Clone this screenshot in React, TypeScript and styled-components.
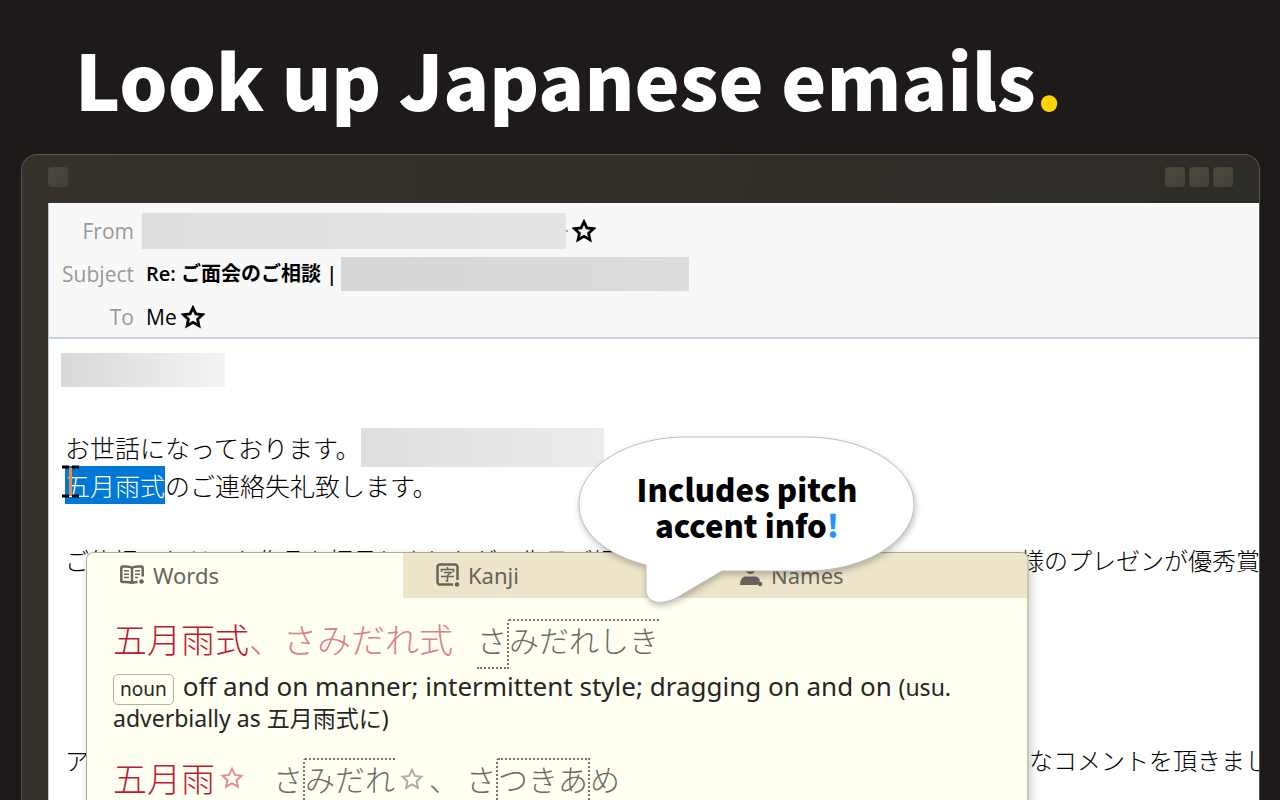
import React from "react";
import styled, { createGlobalStyle, css } from "styled-components";

const jp = `"Noto Sans CJK JP", sans-serif`;
const ui = `"Open Sans", "Noto Sans CJK JP", sans-serif`;
const dict = `"Noto Sans", "Noto Sans CJK JP", sans-serif`;

const GlobalStyle = createGlobalStyle`
  *, *::before, *::after { box-sizing: border-box; }
  body { margin: 0; background: #1e1a19; }
  h1, h2, p, dl, dt, dd { margin: 0; font-weight: inherit; }
`;

const Page = styled.main`
  display: flex;
  flex-direction: column;
  height: 100vh;
  overflow: hidden;
  background: #1e1a19;
  color: #000;
`;

const Headline = styled.h1`
  padding: 14px 75px 0;
  height: 154px;
  flex: none;
  color: #fff;
  font: 900 76px/128px ${jp};
  white-space: nowrap;
`;

const Accent = styled.span<{ $color: string }>`
  color: ${(p) => p.$color};
`;

const Frame = styled.section`
  flex: 1;
  min-height: 0;
  display: flex;
  flex-direction: column;
  margin: 0 20px 0 21px;
  padding-left: 26px;
  border: 1px solid #55544f;
  border-width: 1px 1px 0;
  border-radius: 16px 16px 0 0;
  background: linear-gradient(100deg, #36322b, #2d2b26);
  overflow: hidden;
`;

const TitleBar = styled.div`
  display: flex;
  gap: 4px;
  height: 48px;
  flex: none;
  padding: 12px 26px 0 0;
`;

const FrameButton = styled.button`
  width: 20px;
  height: 20px;
  padding: 0;
  border: 1px solid #48463b;
  border-radius: 3px;
  background: linear-gradient(135deg, #4c493c, #434038);
  &:first-child { margin-right: auto; }
`;

const Mail = styled.article`
  position: relative;
  flex: 1;
  min-height: 0;
  border-left: 1px solid #b9c6dc;
  background: #fff;
  overflow: hidden;
`;

const Fields = styled.dl`
  display: flex;
  flex-direction: column;
  height: 136px;
  padding-top: 7px;
  border-bottom: 2px solid #c8d3df;
  background: #f8f8f8;
  font: 400 21px/30px ${ui};
`;

const Field = styled.div<{ $height: number }>`
  display: flex;
  align-items: center;
  height: ${(p) => p.$height}px;
  white-space: nowrap;
`;

const Label = styled.dt`
  width: 85px;
  flex: none;
  text-align: right;
  color: #999994;
`;

const Value = styled.dd<{ $strong?: boolean; $inset: number }>`
  display: flex;
  align-items: center;
  gap: 4px;
  padding-left: ${(p) => p.$inset}px;
  font-size: ${(p) => (p.$strong ? 20 : 21)}px;
  font-weight: ${(p) => (p.$strong ? 600 : 400)};
`;

const Redacted = styled.span<{ $w: number; $h: number; $from: string; $to: string }>`
  display: block;
  flex: none;
  width: ${(p) => p.$w}px;
  height: ${(p) => p.$h}px;
  background: linear-gradient(90deg, ${(p) => p.$from}, ${(p) => p.$to});
`;

const LinkTail = styled.span`
  width: 2px;
  height: 2px;
  margin-left: -4px;
  background: #7fa6d8;
`;

const Letter = styled.div`
  padding: 14px 0 0 12px;
  font: 300 25px/38px ${jp};
  white-space: nowrap;
`;

const Line = styled.p<{ $before?: number }>`
  display: flex;
  align-items: center;
  height: 38px;
  margin-top: ${(p) => p.$before ?? 0}px;
  padding-left: 4px;
`;

const SplitLine = styled(Line)<{ $split: number }>`
  display: grid;
  grid-template-columns: ${(p) => p.$split}px 1fr;
  font-size: 24px;
  overflow: hidden;
`;

const Selected = styled.mark`
  background: #0078d7;
  color: #fff;
`;

const Caret = styled.svg`
  position: absolute;
  left: 12px;
  top: 262px;
`;

const Popup = styled.aside`
  position: absolute;
  left: 37px;
  top: 349px;
  width: 943px;
  height: 600px;
  border: 1px solid #b0ac94;
  border-right: 2px solid #c9c6ae;
  border-radius: 8px;
  background: #fffff2;
  box-shadow: 2px 3px 8px rgba(0, 0, 0, 0.2);
  overflow: hidden;
`;

const Tabs = styled.nav`
  display: grid;
  grid-template-columns: 316px 303px 1fr;
  height: 45px;
`;

const Tab = styled.button<{ $active?: boolean }>`
  display: flex;
  align-items: center;
  gap: 8px;
  padding: 0 0 2px 33px;
  border: 0;
  background: ${(p) => (p.$active ? "#fffff2" : "#ece5c9")};
  color: #67645c;
  font: 400 22px/30px ${dict};
`;

const Entry = styled.section`
  padding: 19px 26px 4px;
  color: #262626;
`;

const Head = styled.h2`
  display: flex;
  align-items: center;
  height: 44px;
  font: 300 34px/44px ${jp};
  color: #c01a30;
  white-space: nowrap;
`;

const Faded = styled.span`
  color: #dc8088;
`;

const Reading = styled.span`
  display: flex;
  align-items: center;
  margin: 10px 0 0 24px;
  font-size: 30px;
  color: #6c6b60;
  svg { margin-bottom: 8px; }
`;

const line = "2px dotted #77766a";
const Mora = styled.span<{ $pitch?: "high" | "low"; $drop?: boolean; $comma?: boolean }>`
  height: 50px;
  line-height: 36px;
  border-top: 2px solid transparent;
  ${(p) => p.$comma && css`margin-right: 7px;`}
  ${(p) => p.$pitch === "high" && css`border-top: ${line};`}
  ${(p) => p.$pitch === "low" && css`border-bottom: ${line};`}
  ${(p) => p.$drop && css`border-right: ${line};`}
`;

const Meaning = styled.p`
  margin: 10px 0 0;
  font: 400 26px/30px ${dict};
`;

const Small = styled.span`
  font-size: 23px;
`;

const Tag = styled.span`
  display: inline-block;
  margin: -4px 9px -4px 0;
  padding: 0 6px;
  border: 1px solid #b4b2a4;
  border-radius: 5px;
  font-size: 19px;
  line-height: 29px;
`;

const Bubble = styled.div`
  position: absolute;
  left: 526px;
  top: 230px;
  width: 344px;
  height: 184px;
`;

const BubbleShape = styled.svg`
  display: block;
  filter: drop-shadow(1px 3px 3px rgba(0, 0, 0, 0.25));
`;

const BubbleText = styled.p`
  position: absolute;
  inset: 38px 0 auto 0;
  text-align: center;
  font: 900 31px/36px ${jp};
`;

const StarShape = styled.svg<{ $spaced?: boolean }>`
  flex: none;
  margin: ${(p) => (p.$spaced ? "0 5px" : "0")};
`;

const Star = ({ color, thin }: { color: string; thin?: boolean }) => (
  <StarShape $spaced={thin} width="24" height="24" viewBox="0 0 24 24" fill="none" stroke={color} strokeWidth={thin ? 2 : 2.8}>
    <path d="M12 2.800l2.900 6.100 6.600.8-4.900 4.500 1.300 6.500L12 17.400l-5.900 3.300 1.300-6.500-4.900-4.500 6.600-.8z" />
  </StarShape>
);

const WordsIcon = () => (
  <svg width="25" height="20" viewBox="0 0 25 20" fill="none" stroke="#67645c" strokeWidth="2.500">
    <path d="M12 2.800C10 1.500 5 1.300 2.500 1.600Q1.300 1.800 1.300 3V15.500Q1.300 17 2.800 17C6 16.800 10 17 12 18.200M12 2.800c2-1.300 7-1.500 9.500-1.200Q22.700 1.800 22.700 3V11.500M12 18.200c1-.7 3-1.100 5.500-1.200M12 3v15.600" />
    <path d="M4 5.800h5M4 9.200h5M4 12.600h5M15 5.800h5M15 9.200h5M15 12.600h3" strokeWidth="1.500" />
    <circle cx="21.500" cy="16.500" r="2.300" fill="#67645c" stroke="none" />
  </svg>
);

const KanjiIcon = () => (
  <svg width="24" height="24" viewBox="0 0 24 24" fill="none" stroke="#67645c" strokeWidth="2.500">
    <path d="M17 21.500H4A2.500 2.500 0 0 1 1.500 19V4A2.500 2.500 0 0 1 4 1.500h15A2.500 2.500 0 0 1 21.500 4v13" />
    <path d="M11.500 4v2.500M5.500 9V6.500h12V9M8 9.500h7l-3.500 3v5.500h-2M5 13.500h13" strokeWidth="1.500" />
    <circle cx="21" cy="21.500" r="2.300" fill="#67645c" stroke="none" />
  </svg>
);

const NamesIcon = () => (
  <svg width="24" height="24" viewBox="0 0 24 24" fill="#67645c">
    <circle cx="11.500" cy="6" r="5" />
    <path d="M1 22c0-6 3-8.500 6-8.500h9c3 0 4.500 2 5 4.500l-3 4z" />
    <circle cx="21" cy="21" r="2.300" />
  </svg>
);

export default function App() {
  return (
    <Page>
      <GlobalStyle />
      <Headline>
        Look up Japanese emails<Accent $color="#ffd500">.</Accent>
      </Headline>
      <Frame>
        <TitleBar>
          <FrameButton aria-label="Menu" />
          <FrameButton aria-label="Minimize" />
          <FrameButton aria-label="Maximize" />
          <FrameButton aria-label="Close" />
        </TitleBar>
        <Mail>
          <Fields>
            <Field $height={41}>
              <Label>From</Label>
              <Value $inset={8}>
                <Redacted $w={424} $h={36} $from="#dedede" $to="#e4e4e4" />
                <LinkTail />
                <Star color="#000" />
              </Value>
            </Field>
            <Field $height={46}>
              <Label>Subject</Label>
              <Value $inset={12} $strong>
                Re: ご面会のご相談 |
                <Redacted $w={348} $h={34} $from="#d6d6d6" $to="#dcdcda" />
              </Value>
            </Field>
            <Field $height={40}>
              <Label>To</Label>
              <Value $inset={12}>
                Me
                <Star color="#000" />
              </Value>
            </Field>
          </Fields>
          <Letter>
            <Redacted $w={164} $h={34} $from="#d6d9d8" $to="#f4f4f4" />
            <Line $before={41}>
              お世話になっております。
              <Redacted $w={243} $h={39} $from="#dddfdf" $to="#ececeb" />
            </Line>
            <Line>
              <Selected>五月雨式</Selected>のご連絡失礼致します。
            </Line>
            <SplitLine $before={37} $split={955}>
              <span>ご依頼いただいた作品を拝見しましたが、先日ご紹介した多くの会の企業</span>
              <span>様のプレゼンが優秀賞</span>
            </SplitLine>
            <SplitLine $before={162} $split={964}>
              <span>アンケート</span>
              <span>なコメントを頂きました</span>
            </SplitLine>
          </Letter>
          <Caret width="20" height="34" viewBox="0 0 20 34" fill="none" strokeWidth="3">
            <path d="M1 2h7M11 2h7M1 31h7M11 31h7" stroke="#000" />
            <path d="M9.500 3v27" stroke="#f08a3c" />
          </Caret>
          <Popup>
            <Tabs>
              <Tab $active><WordsIcon />Words</Tab>
              <Tab><KanjiIcon />Kanji</Tab>
              <Tab><NamesIcon />Names</Tab>
            </Tabs>
            <Entry>
              <Head>
                五月雨式<Faded>、さみだれ式</Faded>
                <Reading>
                  <Mora $pitch="low" $drop>さ</Mora>
                  <Mora $pitch="high">みだれしき</Mora>
                </Reading>
              </Head>
              <Meaning>
                <Tag>noun</Tag>off and on manner; intermittent style; dragging on and on <Small>(usu.<br />adverbially as 五月雨式に)</Small>
              </Meaning>
            </Entry>
            <Entry>
              <Head>
                五月雨
                <Star color="#e09098" thin />
                <Reading>
                  <Mora $pitch="low" $drop>さ</Mora>
                  <Mora $pitch="high">みだれ</Mora>
                  <Star color="#b0afa4" thin />
                  <Mora $comma>、</Mora>
                  <Mora $pitch="low" $drop>さ</Mora>
                  <Mora $pitch="high" $drop>つきあ</Mora>
                  <Mora>め</Mora>
                </Reading>
              </Head>
            </Entry>
          </Popup>
          <Bubble>
            <BubbleShape width="344" height="184" viewBox="0 0 344 184">
              <path
                d="M111 4H231C290 4 339 34 339 71S290 138 231 138H147L108 161C94 171 71 175 71 156V132C32 122 4 100 4 71C4 34 52 4 111 4Z"
                fill="#fff"
                stroke="#bdbdbd"
              />
            </BubbleShape>
            <BubbleText>
              Includes pitch
              <br />
              accent info<Accent $color="#2196ff">!</Accent>
            </BubbleText>
          </Bubble>
        </Mail>
      </Frame>
    </Page>
  );
}
